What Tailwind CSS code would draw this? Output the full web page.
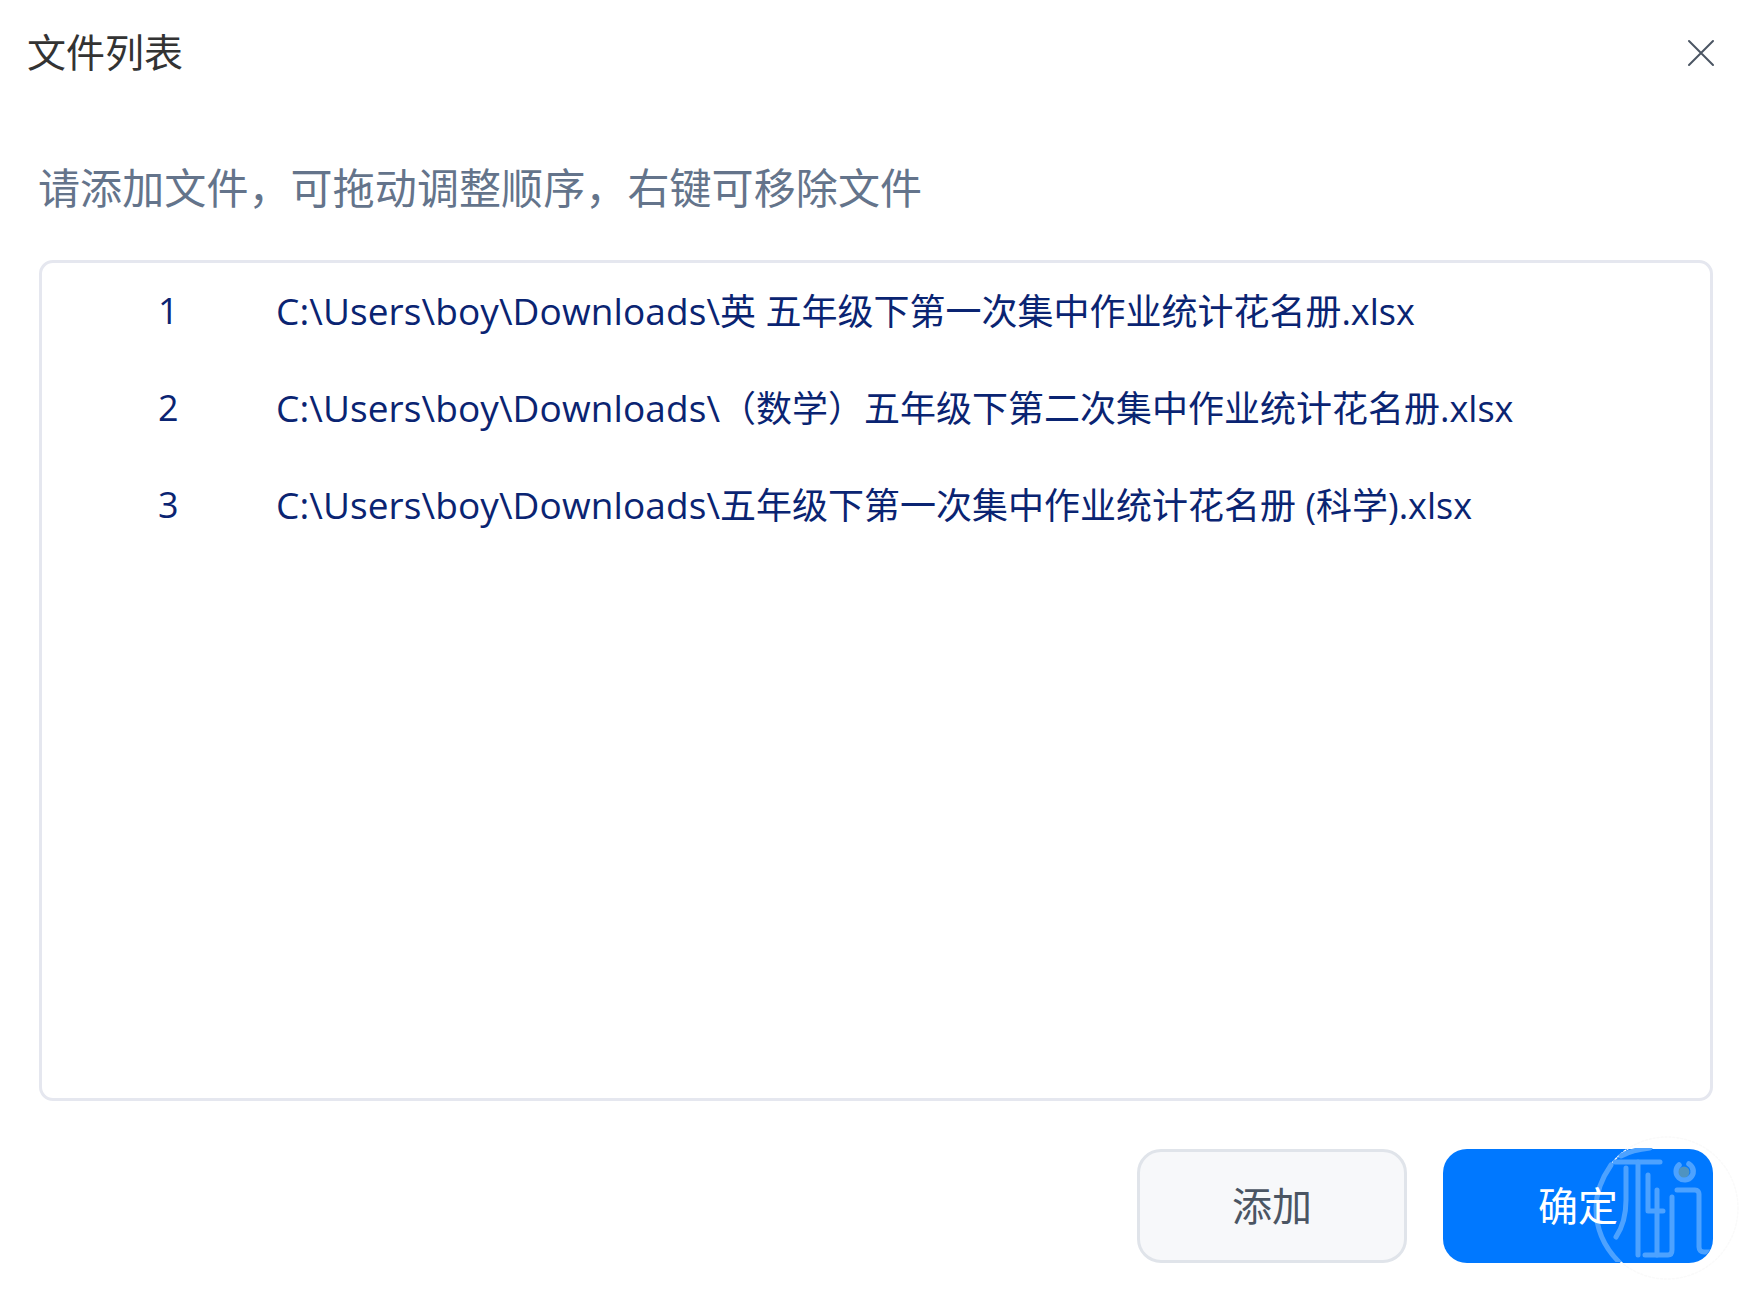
<!DOCTYPE html>
<html lang="zh-CN">
<head>
    <meta charset="UTF-8">
    <meta name="viewport" content="width=device-width, initial-scale=1.0">
    <title>文件列表</title>
    <script src="https://cdn.jsdelivr.net/npm/@tailwindcss/browser@4"></script>
</head>
<body class="bg-white font-['Open_Sans','Noto_Sans_CJK_SC',sans-serif]">
    <div class="relative h-[1296px] w-[1753px] overflow-hidden">

        <!-- Cabecera -->
        <div class="flex h-[102px] items-center justify-between pl-[27px] pr-[34px]">
            <h1 class="text-[39px] leading-none text-[#333333]">文件列表</h1>
            <button class="mt-[3px] flex h-[36px] w-[36px] items-center justify-center">
                <svg width="28" height="28" viewBox="0 0 28 28" fill="none" stroke="#4b5563" stroke-width="2" stroke-linecap="round">
                    <path d="M2 2L26 26M26 2L2 26"/>
                </svg>
            </button>
        </div>

        <div class="pl-[39px] pr-[40px]">
            <p class="ml-[-1px] mt-[58px] h-[56px] text-[42px] leading-[56px] tracking-[0.1px] text-[#64748b]">请添加文件，可拖动调整顺序，右键可移除文件</p>

            <!-- Lista de archivos -->
            <div class="mt-[44px] h-[841px] w-[1674px] rounded-[14px] border-[3px] border-[#e5e7ef] text-[36px] leading-[96px] text-[#0a2472]">
                <div class="flex"><span class="w-[234px] pl-[116px]">1</span><span><span class="text-[37px] tracking-[0.1px]">C:\Users\boy\Downloads\</span>英 五年级下第一次集中作业统计花名册.xlsx</span></div>
                <div class="flex"><span class="w-[234px] pl-[116px]">2</span><span><span class="text-[37px] tracking-[0.1px]">C:\Users\boy\Downloads\</span>（数学）五年级下第二次集中作业统计花名册.xlsx</span></div>
                <div class="flex"><span class="w-[234px] pl-[116px]">3</span><span><span class="text-[37px] tracking-[0.1px]">C:\Users\boy\Downloads\</span>五年级下第一次集中作业统计花名册 (科学).xlsx</span></div>
            </div>

            <!-- Botones -->
            <div class="mt-[48px] flex justify-end gap-[36px]">
                <button class="h-[114px] w-[270px] rounded-[24px] border-[3px] border-[#e0e4ea] bg-[#f7f8fa] text-[40px] text-[#4b5563]">添加</button>
                <button class="h-[114px] w-[270px] rounded-[24px] bg-[#0078ff] text-[40px] text-white"><span class="relative z-10">确定</span></button>
            </div>
        </div>

        <!-- Marca de agua sobre el botón -->
        <svg class="absolute left-[1590px] top-[1130px] pointer-events-none" width="163" height="160" viewBox="1590 1130 163 160" fill="none" stroke-linecap="round" stroke-linejoin="round">
            <defs>
                <clipPath id="btn"><rect x="1443" y="1148" width="270" height="114" rx="24"/></clipPath>
            </defs>
            <circle cx="1667" cy="1208" r="71" stroke="#fafafa" stroke-width="1.5" stroke-dasharray="2 2"/>
            <g clip-path="url(#btn)" stroke="#4da2ff" stroke-width="5">
                <path d="M1611 1165C1602 1178 1596 1192 1596 1208C1596 1228 1604 1247 1619 1262"/>
                <path d="M1621 1156C1630 1151 1640 1149 1650 1148"/>
                <path d="M1615 1162H1660"/>
                <path d="M1638 1162V1255"/>
                <path d="M1626 1168V1200C1626 1216 1622 1228 1616 1237"/>
                <path d="M1648 1175V1211H1663"/>
                <path d="M1657 1190V1255"/>
                <path d="M1645 1255H1668C1671 1255 1672 1253 1672 1250V1197"/>
                <path d="M1677 1190H1695C1698 1190 1699 1192 1699 1194V1247C1699 1250 1701 1252 1704 1252H1713"/>
                <path d="M1679 1165A8.5 8.5 0 1 0 1689 1164" stroke-width="5.5"/>
            </g>
            <circle cx="1684" cy="1172" r="5.5" fill="#4f93c0"/>
        </svg>
    </div>
</body>
</html>
